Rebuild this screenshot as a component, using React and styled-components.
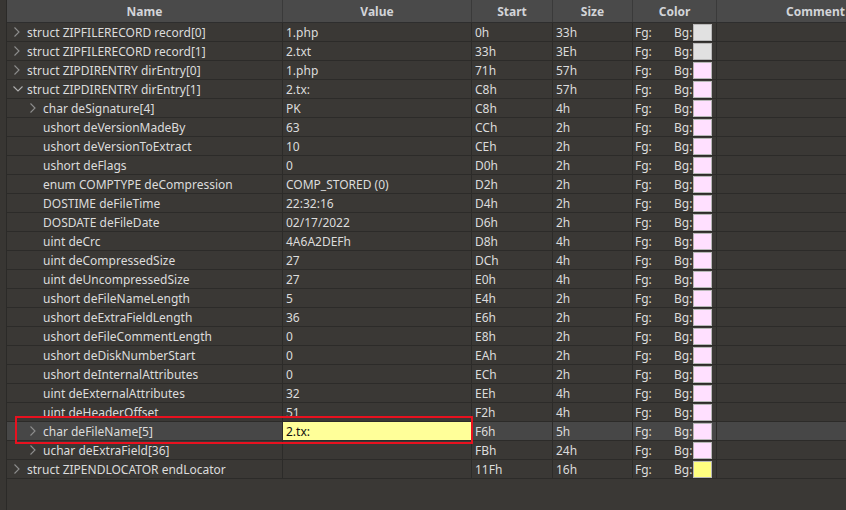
import React from "react";
import styled, { createGlobalStyle } from "styled-components";

const Global = createGlobalStyle`
  html, body { margin: 0; padding: 0; background: #3a3835; overflow: hidden; }
  * { box-sizing: border-box; }
`;

const PINK = "#ffe0ff";
const GRAY = "#e1e1e1";
const YELLOW = "#ffff80";

const rows = [
  { lvl: 0, icon: "right", name: "struct ZIPFILERECORD record[0]", value: "1.php", start: "0h", size: "33h", bg: GRAY },
  { lvl: 0, icon: "right", name: "struct ZIPFILERECORD record[1]", value: "2.txt", start: "33h", size: "3Eh", bg: GRAY },
  { lvl: 0, icon: "right", name: "struct ZIPDIRENTRY dirEntry[0]", value: "1.php", start: "71h", size: "57h", bg: PINK },
  { lvl: 0, icon: "down", name: "struct ZIPDIRENTRY dirEntry[1]", value: "2.tx:", start: "C8h", size: "57h", bg: PINK },
  { lvl: 1, icon: "right", name: "char deSignature[4]", value: "PK", start: "C8h", size: "4h", bg: PINK },
  { lvl: 1, name: "ushort deVersionMadeBy", value: "63", start: "CCh", size: "2h", bg: PINK },
  { lvl: 1, name: "ushort deVersionToExtract", value: "10", start: "CEh", size: "2h", bg: PINK },
  { lvl: 1, name: "ushort deFlags", value: "0", start: "D0h", size: "2h", bg: PINK },
  { lvl: 1, name: "enum COMPTYPE deCompression", value: "COMP_STORED (0)", start: "D2h", size: "2h", bg: PINK },
  { lvl: 1, name: "DOSTIME deFileTime", value: "22:32:16", start: "D4h", size: "2h", bg: PINK },
  { lvl: 1, name: "DOSDATE deFileDate", value: "02/17/2022", start: "D6h", size: "2h", bg: PINK },
  { lvl: 1, name: "uint deCrc", value: "4A6A2DEFh", start: "D8h", size: "4h", bg: PINK },
  { lvl: 1, name: "uint deCompressedSize", value: "27", start: "DCh", size: "4h", bg: PINK },
  { lvl: 1, name: "uint deUncompressedSize", value: "27", start: "E0h", size: "4h", bg: PINK },
  { lvl: 1, name: "ushort deFileNameLength", value: "5", start: "E4h", size: "2h", bg: PINK },
  { lvl: 1, name: "ushort deExtraFieldLength", value: "36", start: "E6h", size: "2h", bg: PINK },
  { lvl: 1, name: "ushort deFileCommentLength", value: "0", start: "E8h", size: "2h", bg: PINK },
  { lvl: 1, name: "ushort deDiskNumberStart", value: "0", start: "EAh", size: "2h", bg: PINK },
  { lvl: 1, name: "ushort deInternalAttributes", value: "0", start: "ECh", size: "2h", bg: PINK },
  { lvl: 1, name: "uint deExternalAttributes", value: "32", start: "EEh", size: "4h", bg: PINK },
  { lvl: 1, name: "uint deHeaderOffset", value: "51", start: "F2h", size: "4h", bg: PINK },
  { lvl: 1, icon: "right", name: "char deFileName[5]", value: "2.tx:", start: "F6h", size: "5h", bg: PINK, selected: true },
  { lvl: 1, icon: "right", name: "uchar deExtraField[36]", value: "", start: "FBh", size: "24h", bg: PINK },
  { lvl: 0, icon: "right", name: "struct ZIPENDLOCATOR endLocator", value: "", start: "11Fh", size: "16h", bg: YELLOW },
];

const widths = [276, 189, 81, 80, 84, 198];

const Page = styled.div`
  position: relative;
  width: 846px;
  height: 510px;
  display: flex;
  overflow: hidden;
  background: #3a3835;
  font-family: "Noto Sans", "Open Sans", sans-serif;
  font-size: 12px;
  color: #dcdcdc;
`;

const Gutter = styled.div`
  width: 7px;
  flex: none;
  background: #383633;
  border-right: 1px solid #2b2a28;
`;

const Table = styled.div`
  display: flex;
  flex-direction: column;
  flex: none;
`;

const HeaderRow = styled.div`
  display: flex;
  height: 23px;
  background: #4a4a4a;
  border-bottom: 1px solid #2e2e2e;
`;

const HeaderCell = styled.div`
  width: ${(p) => p.$w}px;
  flex: none;
  height: 22px;
  line-height: 23px;
  text-align: center;
  font-weight: 700;
  color: #d2d4d8;
  border-right: 1px solid #3a3a3a;
  white-space: nowrap;
  overflow: hidden;
`;

const Row = styled.div`
  display: flex;
  height: 19px;
  border-bottom: 1px solid #2c2b29;
  background: ${(p) => (p.$selected ? "#474747" : "transparent")};
`;

const Cell = styled.div`
  width: ${(p) => p.$w}px;
  flex: none;
  height: 18px;
  line-height: 20px;
  padding-left: 3px;
  border-right: 1px solid #2c2b29;
  white-space: nowrap;
  overflow: hidden;
  background: ${(p) => p.$bg || "transparent"};
  color: ${(p) => p.$fg || "#dcdcdc"};
`;

const NameCell = styled(Cell)`
  display: flex;
  align-items: flex-start;
  padding-left: ${(p) => 5 + p.$lvl * 16}px;
`;

const IconSlot = styled.svg`
  flex: none;
  width: 15px;
  height: 18px;
`;

const ColorCell = styled(Cell)`
  display: flex;
  align-items: flex-start;
  padding-left: 2px;
`;

const Label = styled.span`
  width: ${(p) => p.$w}px;
  flex: none;
`;

const Swatch = styled.span`
  width: 19px;
  height: 17px;
  flex: none;
  background: ${(p) => p.$c};
  border: 1px solid #b8b8b8;
  margin-top: 1px;
`;

const Highlight = styled.div`
  position: absolute;
  left: 15px;
  top: 416px;
  width: 458px;
  height: 28px;
  border: 2px solid #e8111f;
  pointer-events: none;
`;

function Chevron({ dir }) {
  return (
    <IconSlot viewBox="0 0 15 18">
      {dir === "right" && (
        <polyline points="2.5,4.5 7,9 2.5,13.5" fill="none" stroke="#8e8e8e" strokeWidth="1.1" />
      )}
      {dir === "down" && (
        <polyline points="1.5,6.5 6,11 10.5,6.5" fill="none" stroke="#b0b0b0" strokeWidth="1.1" />
      )}
    </IconSlot>
  );
}

export default function App() {
  const headers = ["Name", "Value", "Start", "Size", "Color", "Comment"];
  return (
    <>
      <Global />
      <Page>
        <Gutter />
        <Table>
          <HeaderRow>
            {headers.map((h, i) => (
              <HeaderCell key={h} $w={widths[i]}>
                {h}
              </HeaderCell>
            ))}
          </HeaderRow>
          {rows.map((r, i) => (
            <Row key={i} $selected={r.selected}>
              <NameCell $w={widths[0]} $lvl={r.lvl}>
                <Chevron dir={r.icon} />
                <span>{r.name}</span>
              </NameCell>
              <Cell $w={widths[1]} $bg={r.selected ? "#ffff99" : undefined} $fg={r.selected ? "#111" : undefined}>
                {r.value}
              </Cell>
              <Cell $w={widths[2]}>{r.start}</Cell>
              <Cell $w={widths[3]}>{r.size}</Cell>
              <ColorCell $w={widths[4]}>
                <Label $w={39}>Fg:</Label>
                <Label $w={19}>Bg:</Label>
                <Swatch $c={r.bg} />
              </ColorCell>
              <Cell $w={widths[5]} />
            </Row>
          ))}
        </Table>
        <Highlight />
      </Page>
    </>
  );
}
